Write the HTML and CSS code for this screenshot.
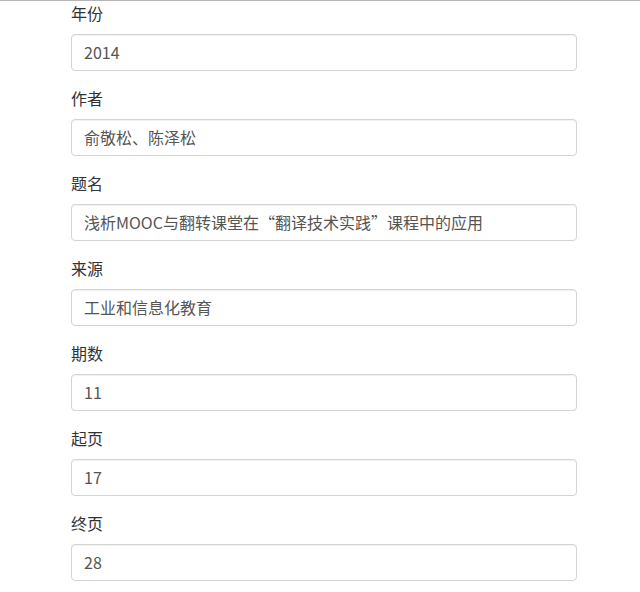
FILE: index.html
```html
<!DOCTYPE html>
<html lang="zh-CN">
<head>
<meta charset="utf-8">
<title>论文信息</title>
<link rel="stylesheet" href="styles.css">
</head>
<body>
<div class="topline"></div>
<form class="form">
  <div class="group"><label class="label">年份</label><input class="control" type="text" value="2014"></div>
  <div class="group"><label class="label">作者</label><input class="control" type="text" value="俞敬松、陈泽松"></div>
  <div class="group"><label class="label">题名</label><input class="control" type="text" value="浅析MOOC与翻转课堂在“翻译技术实践”课程中的应用"></div>
  <div class="group"><label class="label">来源</label><input class="control" type="text" value="工业和信息化教育"></div>
  <div class="group"><label class="label">期数</label><input class="control" type="text" value="11"></div>
  <div class="group"><label class="label">起页</label><input class="control" type="text" value="17"></div>
  <div class="group"><label class="label">终页</label><input class="control" type="text" value="28"></div>
</form>
</body>
</html>
```

FILE: styles.css
```css
html, body {
  margin: 0;
  padding: 0;
  background: #ffffff;
}
body {
  font-family: "Noto Sans CJK SC", "Liberation Sans", sans-serif;
  font-size: 16px;
  color: #333333;
  overflow: hidden;
}
.topline {
  height: 1px;
  background: #b4b4b4;
}
.form {
  margin: 0;
  padding: 1px 0 0 71px;
  width: 506px;
}
.group {
  display: flex;
  flex-direction: column;
  margin-bottom: 16px;
}
.label {
  display: block;
  line-height: 22px;
  height: 22px;
  margin-bottom: 10px;
  font-size: 16px;
  color: #333333;
}
.control {
  box-sizing: border-box;
  width: 506px;
  height: 37px;
  margin: 0;
  padding: 0 12px 2px;
  border: 1px solid #d4d4d4;
  border-radius: 4px;
  box-shadow: inset 0 1px 1px rgba(0,0,0,0.06);
  font-family: "Noto Sans CJK SC", "Liberation Sans", sans-serif;
  font-size: 16px;
  color: #555555;
  background: #ffffff;
  outline: none;
}
```
